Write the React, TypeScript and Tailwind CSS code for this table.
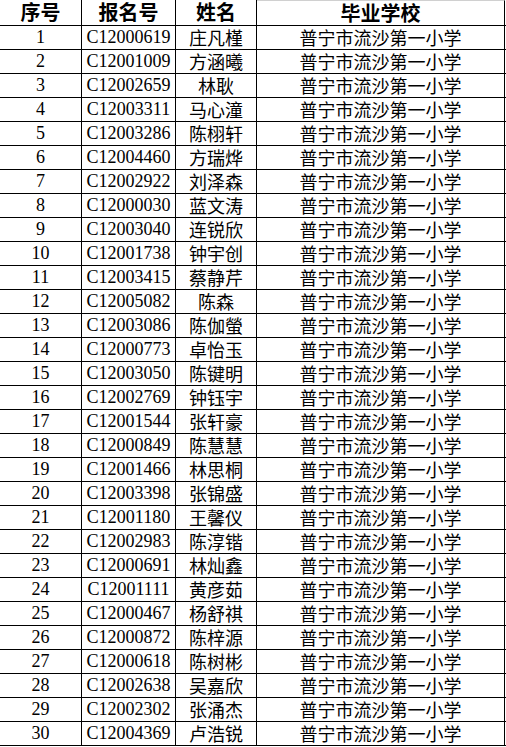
import React from 'react'

const rows: [string, string][] = [
  ['C12000619', '庄凡槿'],
  ['C12001009', '方涵曦'],
  ['C12002659', '林耿'],
  ['C12003311', '马心潼'],
  ['C12003286', '陈栩轩'],
  ['C12004460', '方瑞烨'],
  ['C12002922', '刘泽森'],
  ['C12000030', '蓝文涛'],
  ['C12003040', '连锐欣'],
  ['C12001738', '钟宇创'],
  ['C12003415', '蔡静芹'],
  ['C12005082', '陈森'],
  ['C12003086', '陈伽螢'],
  ['C12000773', '卓怡玉'],
  ['C12003050', '陈键明'],
  ['C12002769', '钟钰宇'],
  ['C12001544', '张轩豪'],
  ['C12000849', '陈慧慧'],
  ['C12001466', '林思桐'],
  ['C12003398', '张锦盛'],
  ['C12001180', '王馨仪'],
  ['C12002983', '陈淳锴'],
  ['C12000691', '林灿鑫'],
  ['C12001111', '黄彦茹'],
  ['C12000467', '杨舒祺'],
  ['C12000872', '陈梓源'],
  ['C12000618', '陈树彬'],
  ['C12002638', '吴嘉欣'],
  ['C12002302', '张涌杰'],
  ['C12004369', '卢浩锐'],
]

const school = '普宁市流沙第一小学'

const serif = "font-['Liberation_Serif','Noto_Sans_CJK_SC',serif]"
const cjk = "font-['Noto_Sans_CJK_SC',sans-serif]"

export default function App() {
  return (
    <div className="w-[506px] h-[747px] bg-white text-black overflow-hidden">
      {/* header */}
      <div className={`flex h-[26px] border-b border-black font-bold text-[20px] leading-[24px] ${cjk}`}>
        <div className="w-[82px] border-r border-black text-center">序号</div>
        <div className="w-[94px] border-r border-black text-center">报名号</div>
        <div className="w-[81px] border-r border-black text-center">姓名</div>
        <div className="w-[248px] border-r border-t border-black border-t-[#d0d0d0] text-center">毕业学校</div>
      </div>
      {rows.map(([id, name], i) => (
        <div key={id} className="flex h-[24px] border-b border-black text-[18px] leading-[23px]">
          <div className={`w-[82px] border-r border-black text-center ${serif}`}>{i + 1}</div>
          <div className={`w-[94px] border-r border-black text-center ${serif}`}>{id}</div>
          <div className={`w-[81px] border-r border-black text-center ${cjk}`}>{name}</div>
          <div className={`w-[248px] border-r border-black text-center ${cjk}`}>{school}</div>
        </div>
      ))}
    </div>
  )
}
